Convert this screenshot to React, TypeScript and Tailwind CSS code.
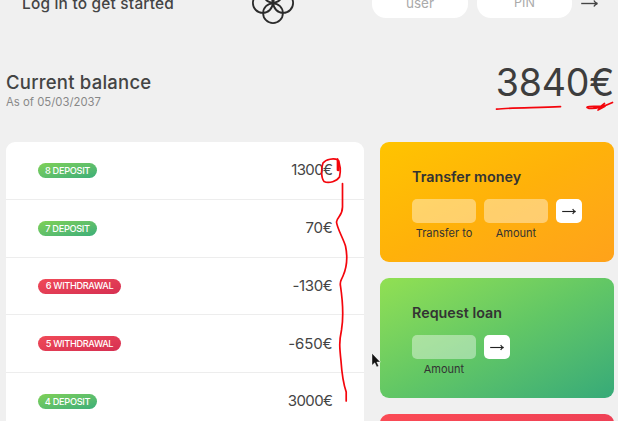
import React from "react";

type Movement = { id: number; type: "deposit" | "withdrawal"; amount: string; track: string };

const movements: Movement[] = [
  { id: 8, type: "deposit", amount: "1300€", track: "tracking-[-0.6px]" },
  { id: 7, type: "deposit", amount: "70€", track: "tracking-[-0.25px]" },
  { id: 6, type: "withdrawal", amount: "-130€", track: "tracking-[-0.35px]" },
  { id: 5, type: "withdrawal", amount: "-650€", track: "tracking-[-0.1px]" },
  { id: 4, type: "deposit", amount: "3000€", track: "tracking-[-0.6px]" },
];

function Arrow({ className }: { className: string }) {
  return (
    <svg viewBox="0 0 16 8" className={className} fill="none" stroke="currentColor" strokeWidth="1.3">
      <path d="M0.2 4H15.2" />
      <path d="M12.2 1.2C12.8 2.6 13.8 3.6 15.5 4C13.8 4.4 12.8 5.4 12.2 6.8" />
    </svg>
  );
}

function Logo() {
  return (
    <svg viewBox="0 0 42 42" className="h-[42px] w-[42px]" fill="none" stroke="#2b2b2b" strokeWidth="1.8">
      <circle cx="21" cy="10.8" r="9.9" />
      <circle cx="10.8" cy="21" r="9.9" />
      <circle cx="31.2" cy="21" r="9.9" />
      <circle cx="21" cy="31.2" r="9.9" />
    </svg>
  );
}

function MovementRow({ m }: { m: Movement }) {
  const colors =
    m.type === "deposit"
      ? "w-[59px] from-[#7fd155] to-[#3bae78] tracking-[-0.3px]"
      : "w-[83px] from-[#f04a58] to-[#d62f52] tracking-[-0.35px]";
  return (
    <div className="flex h-[57.7px] shrink-0 items-center justify-between border-b border-[#ededed] pr-[31.5px] pl-8">
      <span
        className={`flex h-[15px] items-center justify-center rounded-full bg-linear-to-br text-[9.2px] font-medium whitespace-nowrap text-white uppercase ${colors}`}
      >
        {m.id} {m.type}
      </span>
      <span className={`text-[15px] text-[#444] ${m.track}`}>{m.amount}</span>
    </div>
  );
}

function Field({ label }: { label: string }) {
  return (
    <div className="flex w-16 flex-col items-center">
      <div className="h-[23.5px] w-full rounded-[5px] bg-white/40" />
      <span className="mt-[2px] text-[11px] leading-4 whitespace-nowrap">{label}</span>
    </div>
  );
}

function Operation({ title, fields, colors }: { title: string; fields: string[]; colors: string }) {
  return (
    <section className={`h-[120px] shrink-0 rounded-[9px] bg-linear-to-br px-8 pt-[25px] text-[#333] ${colors}`}>
      <h2 className="text-[14.3px] leading-5 font-semibold tracking-[0.02px]">{title}</h2>
      <div className="mt-3 flex gap-2">
        {fields.map((f) => (
          <Field key={f} label={f} />
        ))}
        <button className="flex h-[23.5px] w-[26px] items-center justify-center rounded-[5px] bg-white text-[#222]">
          <Arrow className="h-[7px] w-[14px]" />
        </button>
      </div>
    </section>
  );
}

export default function App() {
  return (
    <div className="relative h-[421px] w-[618px] overflow-hidden bg-[#f0f0f0] font-['Inter','Liberation_Sans',sans-serif] text-[#444]">
      <nav className="-mt-[18px] flex h-[42px] items-center pl-[22px]">
        <p className="w-[230px] pt-px text-[15.4px] font-medium tracking-[0.22px] whitespace-nowrap">Log in to get started</p>
        <Logo />
        <form className="ml-[78px] flex items-center gap-[9px]">
          <span className="flex h-[30px] w-24 items-center justify-center rounded-[14px] bg-white text-[13.5px] text-[#aaa]">user</span>
          <span className="flex h-[30px] w-[95px] items-center justify-center rounded-[14px] bg-white text-[12.5px] text-[#aaa]">PIN</span>
          <Arrow className="h-[9px] w-[17px]" />
        </form>
      </nav>

      <header className="flex h-[118.4px] items-start justify-between pr-[4px] pl-[6px]">
        <div className="pt-[46px]">
          <h1 className="text-[18.5px] leading-6 font-medium tracking-[0.22px]">Current balance</h1>
          <p className="text-[11.3px] leading-4 tracking-[0.02px] text-[#888]">As of 05/03/2037</p>
        </div>
        <p className="pt-[38px] text-[37.5px] leading-[42px] font-normal tracking-[-0.2px] text-[#3d3d3d]">3840€</p>
      </header>

      <main className="flex gap-4 pr-1 pl-[6px]">
        <div className="flex h-[279px] w-[358.5px] flex-col overflow-hidden rounded-t-[9px] bg-white">
          {movements.map((m) => (
            <MovementRow key={m.id} m={m} />
          ))}
        </div>
        <div className="flex h-[279px] flex-1 flex-col gap-4">
          <Operation title="Transfer money" fields={["Transfer to", "Amount"]} colors="from-[#ffc400] via-[#ffb10a] to-[#ffa21a]" />
          <Operation title="Request loan" fields={["Amount"]} colors="from-[#91e052] via-[#62c765] to-[#36aa78]" />
          <section className="h-[120px] shrink-0 rounded-[9px] bg-linear-to-br from-[#fb4b55] to-[#e33655]" />
        </div>
      </main>

      {/* Hand-drawn pen strokes and the pointer float above the page */}
      <svg viewBox="0 0 618 421" className="pointer-events-none absolute inset-0 h-full w-full" fill="none" stroke="#f4050c" strokeWidth="1.7" strokeLinecap="round" strokeLinejoin="round">
        <path d="M496.5 109.2C510 107.5 535 107.8 560.5 106.6" />
        <path d="M612.5 102.5C605 106 596 109.5 589 108.3C583 107 590 106 605 106.2L598 110L604.5 103.5L599.5 107.5L594 108" />
        <path d="M338 160C334 158 326 159 323 163C321 168 321 178 324 181.5C329 184 337 181 339.5 177C341 171 340 164 337.5 159V170" />
        <path d="M338.3 161V170" strokeWidth="2.6" />
        <path d="M342.5 183.5V207C342.5 216 337 217 336.5 222C337 228 343 238 345.5 246C348 258 347 267 343 276C341 281 339.5 281 340.5 286C343 303 344 315 341.5 330C339 342 339.5 347 341 361C342 376 343.5 384 346.2 392V401" />
        <path d="M372 353.5V365.3L374.8 362.8L376.8 367L378.6 366.1L376.8 362H380.2Z" fill="#111" stroke="#fff" strokeWidth="0.4" />
      </svg>
    </div>
  );
}
